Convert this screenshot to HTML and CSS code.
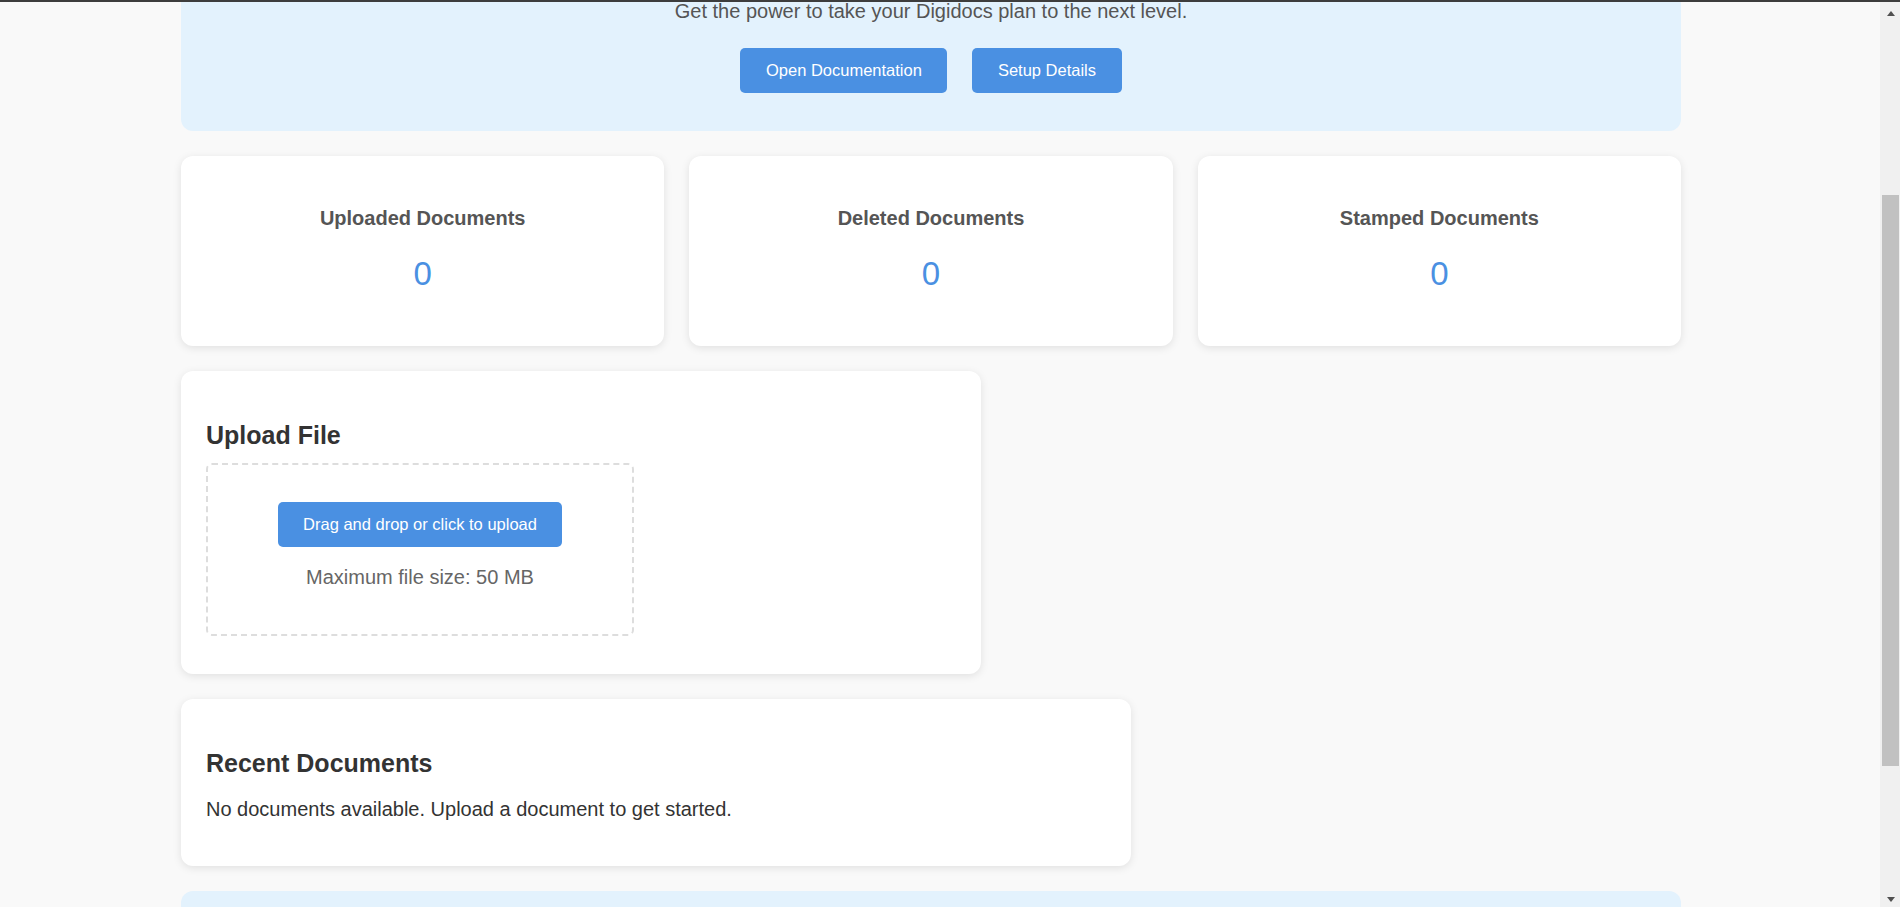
FILE: index.html
```html
<!DOCTYPE html>
<html lang="en">
<head>
<meta charset="utf-8">
<title>Digidocs Dashboard</title>
<link rel="stylesheet" href="styles.css">
</head>
<body>
<div class="topline"></div>
<div class="scroller">
  <main class="page">
    <section class="hero">
      <p class="hero-text">Get the power to take your Digidocs plan to the next level.</p>
      <div class="hero-actions">
        <button class="btn">Open Documentation</button>
        <button class="btn">Setup Details</button>
      </div>
    </section>

    <section class="stats">
      <div class="stat-card">
        <h3>Uploaded Documents</h3>
        <div class="stat-value">0</div>
      </div>
      <div class="stat-card">
        <h3>Deleted Documents</h3>
        <div class="stat-value">0</div>
      </div>
      <div class="stat-card">
        <h3>Stamped Documents</h3>
        <div class="stat-value">0</div>
      </div>
    </section>

    <section class="card upload-card">
      <h2>Upload File</h2>
      <div class="dropzone">
        <button class="btn">Drag and drop or click to upload</button>
        <p>Maximum file size: 50 MB</p>
      </div>
    </section>

    <section class="card recent-card">
      <h2>Recent Documents</h2>
      <p>No documents available. Upload a document to get started.</p>
    </section>

    <section class="promo"></section>
  </main>
</div>
<div class="fake-scrollbar" aria-hidden="true">
  <div class="sb-button"><span class="sb-arrow up"></span></div>
  <div class="sb-track"><div class="sb-thumb"></div></div>
  <div class="sb-button down"><span class="sb-arrow dn"></span></div>
</div>
<script src="script.js"></script>
</body>
</html>
```

FILE: styles.css
```css
* { box-sizing: border-box; }

html, body {
  margin: 0;
  height: 100%;
  overflow: hidden;
}

body {
  font-family: "Liberation Sans", Arial, sans-serif;
  background: #f9f9f9;
  color: #333;
}

.topline {
  height: 2px;
  background: #3d3d3d;
}

.scroller {
  height: calc(100vh - 2px);
  overflow-y: scroll;
  scrollbar-width: none;
}

/* Drawn window scrollbar (overlay on the right edge) */
.fake-scrollbar {
  position: fixed;
  top: 2px;
  right: 0;
  bottom: 0;
  width: 20px;
  background: #f0f0f0;
  display: flex;
  flex-direction: column;
}
.sb-button {
  height: 20px;
  display: flex;
  justify-content: center;
  padding: 9px 0 0 1px;
}
.sb-button.down {
  padding: 10px 0 0 1px;
}
.sb-arrow {
  width: 0;
  height: 0;
  border-left: 4.5px solid transparent;
  border-right: 4.5px solid transparent;
}
.sb-arrow.up {
  border-bottom: 5px solid #505050;
}
.sb-arrow.dn {
  border-top: 5px solid #505050;
}
.sb-track {
  flex: 1;
  padding: 173px 1px 0 2px;
}
.sb-thumb {
  height: 571px;
  background: #c1c1c1;
}

.page {
  width: 1500px;
  margin-left: 181px;
  padding: 25px 0 33px;
  display: flex;
  flex-direction: column;
  gap: 25px;
}

/* Hero */
.hero {
  background: #e3f2fd;
  border-radius: 12px;
  padding: 247px 25px 38px;
  text-align: center;
}
.hero-text {
  margin: 0 0 25px;
  font-size: 20px;
  line-height: 23px;
  color: #555;
}
.hero-actions {
  display: flex;
  justify-content: center;
  gap: 25px;
}

.btn {
  font-family: inherit;
  font-size: 16.5px;
  line-height: 19px;
  padding: 13px 25.5px;
  background: #4a90e2;
  color: #fff;
  border: none;
  border-radius: 5px;
  cursor: pointer;
}

/* Stats */
.stats {
  display: grid;
  grid-template-columns: repeat(3, 1fr);
  gap: 25px;
}
.stat-card {
  background: #fff;
  border-radius: 12px;
  box-shadow: 0 2px 8px rgba(0, 0, 0, 0.1);
  padding: 51px 25px 53px;
  text-align: center;
}
.stat-card h3 {
  margin: 0 0 25px;
  font-size: 20px;
  line-height: 23px;
  font-weight: bold;
  color: #555;
}
.stat-value {
  font-size: 33px;
  line-height: 38px;
  color: #4a90e2;
}

/* Cards */
.card {
  background: #fff;
  border-radius: 12px;
  box-shadow: 0 2px 8px rgba(0, 0, 0, 0.1);
  padding: 25px;
}
.card h2 {
  margin: 25px 0 13px;
  font-size: 25px;
  line-height: 29px;
  font-weight: bold;
  color: #333;
}

.upload-card {
  width: 800px;
}
.dropzone {
  width: 428px;
  border: 2px dashed #ddd;
  border-radius: 6px;
  padding: 37px;
  text-align: center;
  margin-bottom: 13px;
}
.dropzone p {
  margin: 19px 0 8px;
  font-size: 20px;
  line-height: 23px;
  color: #666;
}

.recent-card {
  width: 950px;
}
.recent-card h2 {
  margin-bottom: 20px;
}
.recent-card p {
  margin: 0 0 20px;
  font-size: 20px;
  line-height: 23px;
  color: #333;
}

.promo {
  background: #e3f2fd;
  border-radius: 12px;
  height: 175px;
}
```

FILE: script.js
```js
document.querySelector('.scroller').scrollTop = 274;
```
